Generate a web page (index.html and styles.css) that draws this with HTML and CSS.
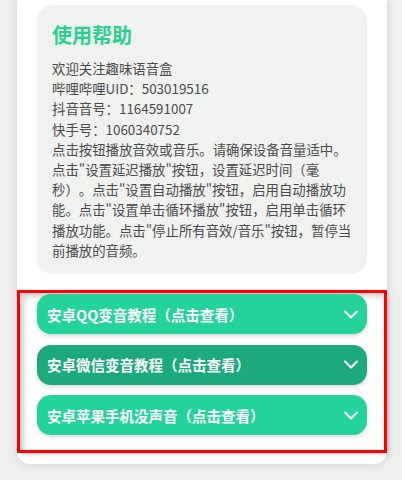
FILE: index.html
```html
<!DOCTYPE html>
<html lang="zh">
<head>
<meta charset="utf-8">
<link rel="stylesheet" href="styles.css">
</head>
<body>
<div class="card">
  <div class="help">
    <h2 class="help-title">使用帮助</h2>
    <p class="help-text">欢迎关注趣味语音盒<br>哔哩哔哩UID：503019516<br>抖音音号：1164591007<br>快手号：1060340752<br>点击按钮播放音效或音乐。请确保设备音量适中。点击"设置延迟播放"按钮，设置延迟时间（毫秒）。点击"设置自动播放"按钮，启用自动播放功能。点击"设置单击循环播放"按钮，启用单击循环播放功能。点击"停止所有音效/音乐"按钮，暂停当前播放的音频。</p>
  </div>
  <div class="tutorials">
    <div class="acc">
      <span class="acc-label">安卓QQ变音教程（点击查看）</span>
      <svg class="chev" width="14" height="9" viewBox="0 0 14 9"><polyline points="1,1.5 7,7.5 13,1.5" fill="none" stroke="#fff" stroke-width="2" stroke-linecap="round" stroke-linejoin="round"/></svg>
    </div>
    <div class="acc acc-dark">
      <span class="acc-label">安卓微信变音教程（点击查看）</span>
      <svg class="chev" width="14" height="9" viewBox="0 0 14 9"><polyline points="1,1.5 7,7.5 13,1.5" fill="none" stroke="#fff" stroke-width="2" stroke-linecap="round" stroke-linejoin="round"/></svg>
    </div>
    <div class="acc">
      <span class="acc-label">安卓苹果手机没声音（点击查看）</span>
      <svg class="chev" width="14" height="9" viewBox="0 0 14 9"><polyline points="1,1.5 7,7.5 13,1.5" fill="none" stroke="#fff" stroke-width="2" stroke-linecap="round" stroke-linejoin="round"/></svg>
    </div>
  </div>
</div>
</body>
</html>
```

FILE: styles.css
```css
html, body {
  margin: 0;
  padding: 0;
}
body {
  background: #eeefee;
  font-family: "Noto Sans CJK SC", "Noto Sans", sans-serif;
  height: 480px;
  overflow: hidden;
  text-spacing-trim: space-all;
}
.card {
  margin: 0 15px 0 17px;
  background: #fff;
  border-radius: 0 0 13px 13px;
  box-shadow: 0 0 10px rgba(0, 0, 0, 0.13);
  padding: 5px 20px 14px 20px;
}
.help {
  background: #f0f2f0;
  border-radius: 16px;
  padding: 15px 13px 14px 15px;
}
.help-title {
  margin: 0 0 9px 0;
  font-size: 20px;
  line-height: 29px;
  font-weight: 700;
  color: #28d090;
}
.help-text {
  margin: 0;
  font-size: 13.4px;
  line-height: 20.2px;
  color: #4a4a4a;
  text-spacing-trim: space-all;
}
.tutorials {
  margin: 19px -17px 0 -17px;
  padding: 1px 17px 15px 17px;
  outline: 3px solid #ff0000;
  box-shadow: 3px 3px 5px rgba(0, 0, 0, 0.35), inset 3px 3px 6px rgba(0, 0, 0, 0.22);
  display: flex;
  flex-direction: column;
  gap: 10.5px;
}
.acc {
  height: 40px;
  border-radius: 14px;
  background: #23d39b;
  box-shadow: 0 2px 4px rgba(0, 0, 0, 0.16);
  display: flex;
  align-items: center;
  justify-content: space-between;
  padding: 0 9px 0 10px;
}
.acc-dark {
  background: #1ca97d;
}
.acc-label {
  color: #fff;
  font-size: 14.5px;
  font-weight: 700;
}
.chev {
  display: block;
}
```
